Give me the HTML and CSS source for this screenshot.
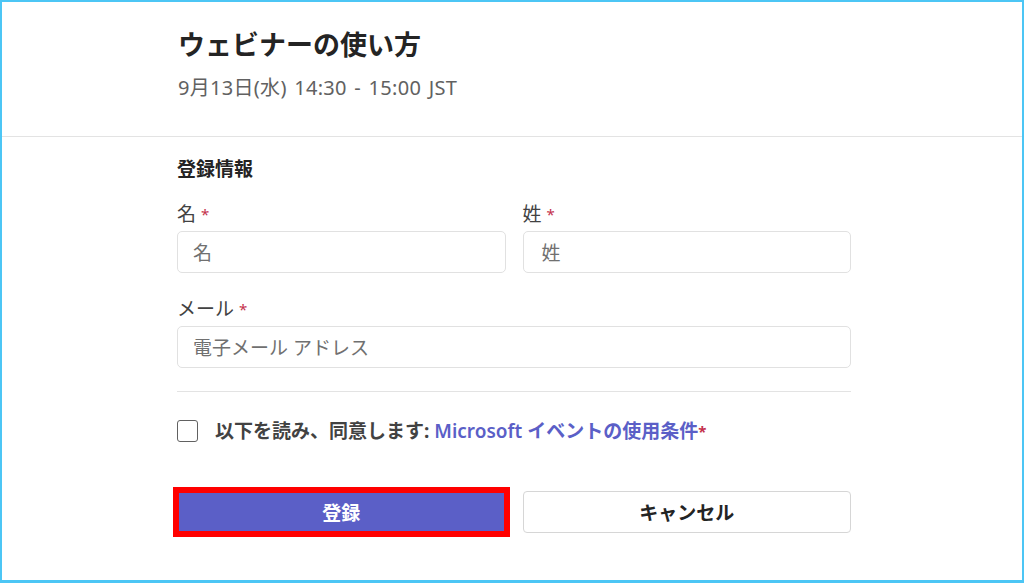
FILE: index.html
```html
<!DOCTYPE html>
<html lang="ja">
<head>
<meta charset="utf-8">
<title>ウェビナーの使い方</title>
<link rel="stylesheet" href="styles.css">
</head>
<body>
<div class="frame">
  <header class="head">
    <h1 class="title">ウェビナーの使い方</h1>
    <p class="date">9月13日(水) 14:30 - 15:00 JST</p>
  </header>
  <form class="form">
    <h2 class="section">登録情報</h2>
    <div class="row">
      <div class="field">
        <label class="label">名 <span class="req">*</span></label>
        <div class="input"><span class="ph">名</span></div>
      </div>
      <div class="field">
        <label class="label">姓 <span class="req">*</span></label>
        <div class="input"><span class="ph">姓</span></div>
      </div>
    </div>
    <div class="field email">
      <label class="label">メール <span class="req">*</span></label>
      <div class="input"><span class="ph">電子メール アドレス</span></div>
    </div>
    <div class="divider"></div>
    <div class="agree">
      <span class="box"></span>
      <span class="agree-text">以下を読み、同意します: <span class="link">Microsoft イベントの使用条件</span><span class="req">*</span></span>
    </div>
    <div class="actions">
      <button type="button" class="btn primary">登録</button>
      <button type="button" class="btn secondary">キャンセル</button>
    </div>
  </form>
</div>
</body>
</html>
```
FILE: styles.css
```css
* { box-sizing: border-box; }
html, body { margin: 0; padding: 0; background: #fff; }
body {
  font-family: "Noto Sans", "Noto Sans CJK JP", sans-serif;
  color: #242424;
}
.frame {
  width: 1024px;
  height: 583px;
  border: 2px solid #4cc6f5;
  border-bottom-width: 3px;
  background: #fff;
  overflow: hidden;
}
.head {
  height: 135px;
  padding: 25px 0 0 176px;
  border-bottom: 1px solid #e3e3e3;
}
.title {
  margin: 0;
  font-size: 27px;
  line-height: 36px;
  font-weight: 700;
  color: #242424;
}
.date {
  margin: 12px 0 0;
  font-size: 20px;
  line-height: 26px;
  word-spacing: 2px;
  letter-spacing: 0.3px;
  color: #616161;
}
.form {
  width: 674px;
  margin-left: 175px;
  padding-top: 19px;
  display: flex;
  flex-direction: column;
}
.section {
  margin: 0;
  font-size: 19px;
  line-height: 26px;
  font-weight: 700;
  color: #242424;
}
.row {
  display: grid;
  grid-template-columns: 1fr 1fr;
  column-gap: 17px;
  margin-top: 19px;
}
.field { display: flex; flex-direction: column; }
.email { margin-top: 23px; }
.label {
  font-size: 19px;
  line-height: 26px;
  color: #424242;
}
.req { color: #c4314b; font-size: 15px; vertical-align: top; }
.input {
  margin-top: 4px;
  height: 42px;
  border: 1px solid #e1e1e1;
  border-radius: 5px;
  padding: 0 15px;
  display: flex;
  align-items: center;
}
.field:last-child .input { padding-left: 18px; }
.email .input { padding-left: 15px; }
.ph { font-size: 19px; color: #707070; }
.divider {
  margin-top: 23px;
  height: 1px;
  background: #e3e3e3;
}
.agree {
  margin-top: 26px;
  display: flex;
  align-items: center;
  gap: 17px;
}
.box {
  width: 21px;
  height: 22px;
  border: 1.5px solid #616161;
  border-radius: 3px;
  flex: none;
}
.agree-text {
  font-size: 19px;
  line-height: 26px;
  font-weight: 700;
  color: #424242;
}
.link { color: #5b5fc7; font-weight: 600; }
.agree .req { font-size: 15px; }
.actions {
  margin-top: 47px;
  display: grid;
  grid-template-columns: 1fr 1fr;
  column-gap: 17px;
}
.btn {
  height: 42px;
  border-radius: 4px;
  font-family: inherit;
  font-size: 19px;
  font-weight: 700;
  cursor: pointer;
}
.primary {
  background: #5b5fc7;
  color: #fff;
  border: none;
  outline: 6px solid #ff0000;
  outline-offset: -2px;
  border-radius: 0;
}
.secondary {
  background: #fff;
  color: #242424;
  border: 1px solid #d6d6d6;
}
```
